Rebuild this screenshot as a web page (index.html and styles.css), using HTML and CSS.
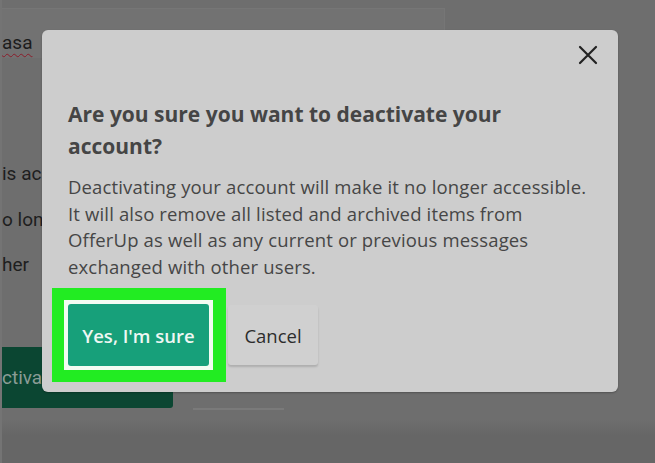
FILE: index.html
```html
<!DOCTYPE html>
<html lang="en">
<head>
    <meta charset="UTF-8">
    <meta name="viewport" content="width=device-width, initial-scale=1.0">
    <title>Deactivate account</title>
    <link rel="stylesheet" href="styles.css">
</head>
<body>
    <div class="page">
        <div class="name-field">
            <span class="typo">asa</span>
        </div>
        <div class="page-text">
            <p>is ac</p>
            <p>o lon</p>
            <p>her</p>
        </div>
        <div class="page-actions">
            <button class="page-btn dark">ctivate account</button>
            <button class="page-btn ghost">Cancel</button>
        </div>
    </div>

    <div class="overlay">
        <div class="modal">
            <div class="modal-head">
                <button class="close-btn" aria-label="Close">
                    <svg width="20" height="20" viewBox="0 0 20 20">
                        <path d="M2 2 L18 18 M18 2 L2 18" stroke="#222" stroke-width="2.2" stroke-linecap="round"/>
                    </svg>
                </button>
            </div>
            <h2 class="modal-title">Are you sure you want to deactivate your account?</h2>
            <p class="modal-text">Deactivating your account will make it no longer accessible. It will also remove all listed and archived items from OfferUp as well as any current or previous messages exchanged with other users.</p>
            <div class="modal-actions">
                <div class="highlight">
                    <div class="highlight-ring">
                        <button class="btn btn-confirm">Yes, I'm sure</button>
                    </div>
                </div>
                <button class="btn btn-cancel">Cancel</button>
            </div>
        </div>
    </div>
</body>
</html>
```

FILE: styles.css
```css
body {
    margin: 0;
    padding: 0;
    width: 655px;
    height: 463px;
    overflow: hidden;
    font-family: 'Open Sans', sans-serif;
    background: linear-gradient(to bottom, #6e6e6e 0, #6e6e6e 420px, #666 435px, #666 100%);
}

.page {
    padding-top: 8px;
    border-left: 2px solid #747474;
    height: 455px;
}

.name-field {
    width: 443px;
    height: 50px;
    background-color: #727272;
    border-top: 1px solid #767676;
    border-right: 1px solid #767676;
    box-sizing: border-box;
    padding-top: 22px;
}

.typo {
    font-family: 'Roboto', sans-serif;
    font-size: 19px;
    color: #1c1c1c;
    text-decoration: underline wavy #8a1c2a;
    text-decoration-thickness: 1px;
    text-underline-offset: 4px;
}

.page-text {
    margin-top: 104px;
}

.page-text p {
    margin: 0;
    height: 45.5px;
    font-family: 'Roboto', sans-serif;
    font-size: 19px;
    color: #1e1e1e;
    white-space: nowrap;
}

.page-actions {
    display: flex;
    gap: 20px;
    margin-top: 48px;
}

.page-btn {
    height: 61px;
    border: none;
    font-family: 'Roboto', sans-serif;
    font-size: 19px;
    padding: 0;
}

.page-btn.dark {
    width: 171px;
    background-color: #0b4632;
    color: #8a9c95;
    text-align: left;
    border-radius: 0 3px 3px 0;
}

.page-btn.ghost {
    width: 91px;
    background: transparent;
    color: transparent;
    border-bottom: 2px solid #7a7a7a;
    margin-top: 2px;
}

.overlay {
    position: absolute;
    top: 0;
    left: 0;
    width: 655px;
    height: 463px;
}

.modal {
    position: absolute;
    left: 42px;
    top: 30px;
    width: 576px;
    height: 362px;
    box-sizing: border-box;
    background-color: #cdcdcd;
    border-radius: 6px;
    padding: 14px 19px 0 26px;
    box-shadow: 0 1px 2px rgba(0, 0, 0, 0.25);
}

.modal-head {
    display: flex;
    justify-content: flex-end;
    height: 22px;
}

.close-btn {
    width: 22px;
    height: 22px;
    padding: 1px;
    border: none;
    background: transparent;
    cursor: pointer;
}

.modal-title {
    margin: 32px 0 12px;
    width: 524px;
    font-size: 21px;
    line-height: 32px;
    font-weight: 700;
    color: #454545;
}

.modal-text {
    margin: 0;
    width: 524px;
    font-size: 18.5px;
    letter-spacing: 0.15px;
    line-height: 26.5px;
    color: #464646;
}

.modal-actions {
    display: flex;
    align-items: center;
    gap: 2px;
    margin-top: 8px;
    margin-left: -16px;
}

.highlight {
    background-color: #22ec22;
    padding: 12px 13px 12px 12px;
}

.highlight-ring {
    background-color: #f2fcf2;
    padding: 4px;
}

.btn {
    height: 62px;
    border: none;
    border-radius: 3px;
    font-family: 'Open Sans', sans-serif;
    font-size: 18.5px;
    cursor: pointer;
    display: block;
}

.btn-confirm {
    width: 141px;
    background-color: #17a07a;
    color: #eef7f3;
    font-weight: 600;
}

.btn-cancel {
    width: 90px;
    height: 60px;
    background-color: #d0d0d0;
    color: #2c2c2c;
    box-shadow: 0 2px 2px rgba(0, 0, 0, 0.15);
}
```
